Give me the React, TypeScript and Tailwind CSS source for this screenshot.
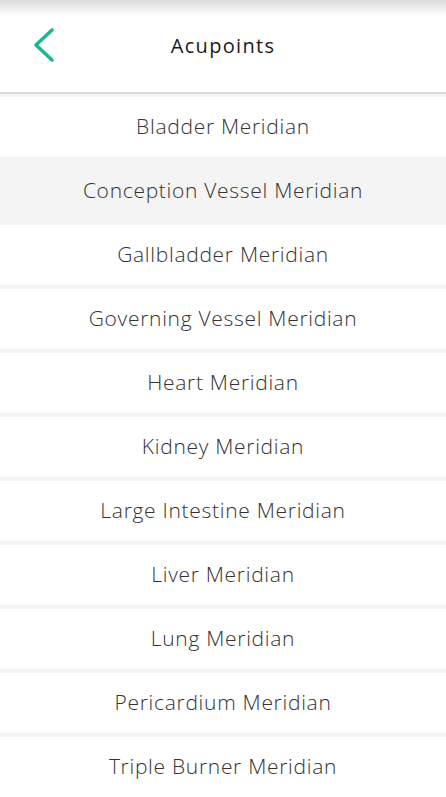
const meridians = [
  'Bladder Meridian',
  'Conception Vessel Meridian',
  'Gallbladder Meridian',
  'Governing Vessel Meridian',
  'Heart Meridian',
  'Kidney Meridian',
  'Large Intestine Meridian',
  'Liver Meridian',
  'Lung Meridian',
  'Pericardium Meridian',
  'Triple Burner Meridian',
];

export default function App() {
  const active = 'Conception Vessel Meridian';

  return (
    <div className="w-[446px] h-[797px] overflow-hidden bg-white font-['Open_Sans',sans-serif]">
      {/* Header */}
      <div className="relative h-[94px] bg-white border-b-2 border-[#dadada]">
        <div className="absolute inset-x-0 top-0 h-4 bg-gradient-to-b from-[#dcdcdc] to-white" />
        <div className="relative flex items-center h-full">
          <button className="w-[86px] h-full flex items-center pl-[32px] pb-[2px]">
            <svg width="24" height="36" viewBox="0 0 24 36" fill="none" stroke="#1fb592" strokeWidth="3.6" strokeLinecap="round" strokeLinejoin="round">
              <polyline points="20,3 4,18 20,33" />
            </svg>
          </button>
          <h1 className="flex-1 text-center pr-[86px] pb-[1px] text-[20px] tracking-[1.3px] font-medium text-[#1a1a1a]">Acupoints</h1>
        </div>
      </div>

      {/* List */}
      <div className="flex flex-col gap-1 pt-[3px] bg-[#f4f4f4]">
        {meridians.map(m => (
          <div
            key={m}
            className={`h-[60px] flex items-center justify-center text-[21px] tracking-[0.7px] font-light text-[#333] ${m === active ? 'bg-[#f4f4f4]' : 'bg-white'}`}
          >
            {m}
          </div>
        ))}
      </div>
    </div>
  );
}
